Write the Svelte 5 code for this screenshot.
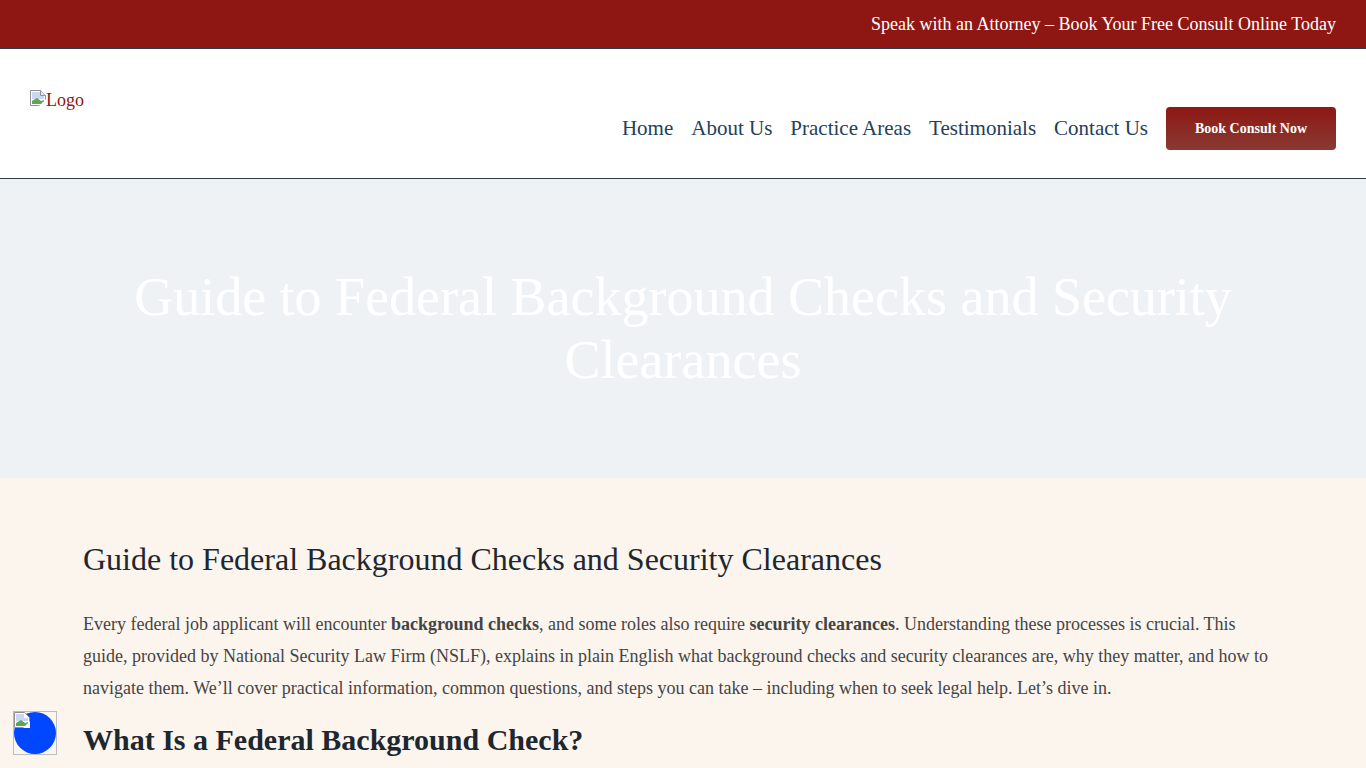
<script>
  const nav = ['Home', 'About Us', 'Practice Areas', 'Testimonials', 'Contact Us'];
</script>

<div class="page">
  <div class="topbar"><a href="#top">Speak with an Attorney – Book Your Free Consult Online Today</a></div>
  <header class="header">
    <a class="logo" href="#logo">
      <svg class="broken" width="16" height="16" viewBox="0 0 16 16" aria-hidden="true">
        <path d="M0.5 0.5H10.5L15.5 5.5V15.5H0.5Z" fill="#fff" stroke="#8f8f8f"/>
        <path d="M10.5 0.5V5.5H15.5" fill="#e6e6e6" stroke="#8f8f8f"/>
        <path d="M2 2H10V6H14V9L2 9Z" fill="#c9d7f5"/>
        <path d="M2 14V11L7 8L11 11L14 10V14Z" fill="#5fa453"/>
        <path d="M9 16L16 9V16Z" fill="#fff"/>
      </svg><span>Logo</span>
    </a>
    <nav class="nav">
      {#each nav as item}<a href="#nav">{item}</a>{/each}
      <a class="cta" href="#book">Book Consult Now</a>
    </nav>
  </header>
  <section class="hero">
    <h1>Guide to Federal Background Checks and Security Clearances</h1>
  </section>
  <main class="content">
    <h2>Guide to Federal Background Checks and Security Clearances</h2>
    <p>Every federal job applicant will encounter <strong>background checks</strong>, and some roles also require <strong>security clearances</strong>. Understanding these processes is crucial. This guide, provided by National Security Law Firm (NSLF), explains in plain English what background checks and security clearances are, why they matter, and how to navigate them. We’ll cover practical information, common questions, and steps you can take – including when to seek legal help. Let’s dive in.</p>
    <h3>What Is a Federal Background Check?</h3>
  </main>
  <div class="widget">
    <div class="dot"></div>
    <svg class="broken small" width="16" height="16" viewBox="0 0 16 16" aria-hidden="true">
      <path d="M0.5 0.5H10.5L15.5 5.5V15.5H0.5Z" fill="#fff" stroke="#8f8f8f"/>
      <path d="M2 2H10V6H14V9L2 9Z" fill="#c9d7f5"/>
      <path d="M2 14V11L7 8L11 11L14 10V14Z" fill="#5fa453"/>
      <path d="M9 16L16 9V16Z" fill="#fff"/>
    </svg>
  </div>
</div>

<style>
  :global(body) {
    margin: 0;
    background: #fcf5ee;
    font-family: "Liberation Serif", "Times New Roman", serif;
    overflow: hidden;
  }
  .page { height: 768px; overflow: hidden; }
  a { text-decoration: none; }
  .topbar {
    height: 48px;
    background: #8e1713;
    border-bottom: 1px solid #2c3e50;
    display: flex;
    align-items: center;
    justify-content: flex-end;
    padding: 0 30px;
    font-size: 18px;
  }
  .topbar a { color: #fff; }
  .header {
    height: 129px;
    background: #fff;
    border-bottom: 1px solid #2c3e50;
    display: flex;
    justify-content: space-between;
    padding: 0 30px;
  }
  .logo {
    color: #8e1713;
    font-size: 18px;
    padding-top: 35px;
    height: 32px;
    line-height: 32px;
    display: block;
  }
  .broken { vertical-align: baseline; }
  .logo .broken { margin-bottom: 0; }
  .nav {
    display: flex;
    align-items: center;
    gap: 18px;
    margin-top: 58px;
    height: 43px;
    font-size: 21px;
  }
  .nav a { color: #24405a; }
  .nav a.cta {
    width: 170px;
    height: 43px;
    display: flex;
    align-items: center;
    justify-content: center;
    border-radius: 4px;
    background: linear-gradient(#8e1713, #883a33);
    color: #fff;
    font-size: 14px;
    font-weight: 700;
  }
  .hero {
    height: 299px;
    background: #eff2f4;
    display: flex;
    align-items: center;
    justify-content: center;
    padding: 0 120px;
  }
  h1 {
    margin: 0;
    color: #fff;
    font-size: 54px;
    font-weight: 400;
    line-height: 63px;
    text-align: center;
  }
  .content { padding: 62px 83px 0; color: #1d2730; }
  h2 { margin: 0 0 30px; font-size: 32px; font-weight: 400; line-height: 38px; }
  p { margin: 0; font-size: 18px; line-height: 32px; color: #444; }
  h3 { margin: 18px 0 0; font-size: 30px; font-weight: 700; line-height: 36px; letter-spacing: 0; }
  .widget {
    position: fixed;
    left: 13px;
    top: 711px;
    width: 42px;
    height: 42px;
    border: 1px solid #bdbdbd;
  }
  .dot {
    position: absolute;
    inset: 0;
    border-radius: 50%;
    background: #0047ff;
  }
  .small { position: absolute; left: 0; top: 0; }
</style>
